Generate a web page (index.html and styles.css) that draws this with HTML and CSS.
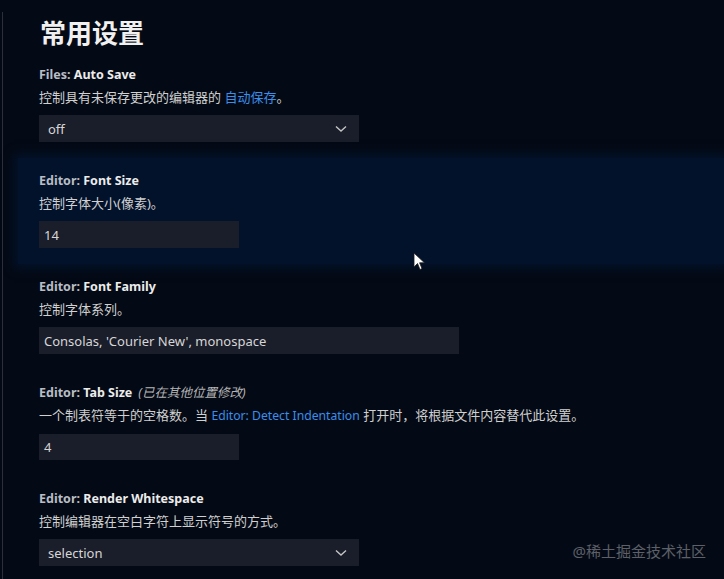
FILE: index.html
```html
<!DOCTYPE html>
<html lang="zh">
<head>
<meta charset="utf-8">
<link rel="stylesheet" href="styles.css">
</head>
<body>
<div class="page">
  <div class="content">
    <h1 class="title">常用设置</h1>

    <div class="setting">
      <div class="label"><span class="cat">Files: </span><span class="key">Auto Save</span></div>
      <div class="desc">控制具有未保存更改的编辑器的 <span class="link">自动保存</span>。</div>
      <div class="select w320"><span>off</span>
        <svg class="chev" width="12" height="8" viewBox="0 0 12 8"><path d="M1 1.5 L6 6 L11 1.5" fill="none" stroke="#c5c5c5" stroke-width="1.4"/></svg>
      </div>
    </div>

    <div class="setting hover">
      <div class="label"><span class="cat">Editor: </span><span class="key">Font Size</span></div>
      <div class="desc">控制字体大小(像素)。</div>
      <div class="input w200">14</div>
    </div>

    <div class="setting">
      <div class="label"><span class="cat">Editor: </span><span class="key">Font Family</span></div>
      <div class="desc">控制字体系列。</div>
      <div class="input w420">Consolas, 'Courier New', monospace</div>
    </div>

    <div class="setting">
      <div class="label"><span class="cat">Editor: </span><span class="key">Tab Size</span><span class="mod">(已在其他位置修改)</span></div>
      <div class="desc">一个制表符等于的空格数。当 <span class="link latin">Editor: Detect Indentation</span> 打开时，将根据文件内容替代此设置。</div>
      <div class="input w200">4</div>
    </div>

    <div class="setting">
      <div class="label"><span class="cat">Editor: </span><span class="key">Render Whitespace</span></div>
      <div class="desc">控制编辑器在空白字符上显示符号的方式。</div>
      <div class="select w320"><span>selection</span>
        <svg class="chev" width="12" height="8" viewBox="0 0 12 8"><path d="M1 1.5 L6 6 L11 1.5" fill="none" stroke="#c5c5c5" stroke-width="1.4"/></svg>
      </div>
    </div>
  </div>
  <div class="watermark">@稀土掘金技术社区</div>
  <svg class="cursor" width="14" height="20" viewBox="0 0 14 20"><path d="M1 1 L1 15 L4.5 11.5 L7 17.5 L9 16.6 L6.6 10.8 L11.5 10.8 Z" fill="#ffffff" stroke="#1a1a1a" stroke-width="0.8"/></svg>
</div>
</body>
</html>
```

FILE: styles.css
```css
html, body {
  margin: 0;
  padding: 0;
  background: #040a15;
  height: 100%;
  overflow: hidden;
}
.page {
  position: relative;
  width: 724px;
  height: 579px;
  background: #040a15;
  font-family: "Noto Sans", "Noto Sans CJK SC", sans-serif;
  color: #cccccc;
  overflow: hidden;
}
.page::before {
  content: "";
  position: absolute;
  left: 2px;
  top: 12px;
  bottom: 0;
  width: 1px;
  background: #2b2f3a;
}
.content {
  display: flex;
  flex-direction: column;
}
.title {
  margin: 0 0 2px 0;
  padding: 14px 0 0 40px;
  font-size: 26px;
  line-height: 36px;
  font-weight: 700;
  color: #f0f0f0;
  font-family: "Noto Sans CJK SC", sans-serif;
}
.setting {
  padding: 13px 0 16px 39px;
  height: 77px;
  display: flex;
  flex-direction: column;
  align-items: flex-start;
}
.setting.hover {
  background: #02122b;
  box-shadow: 0 0 10px 4px #02122b;
  margin-left: 18px;
  padding-left: 21px;
}
.label {
  font-size: 12.5px;
  line-height: 20px;
  margin-bottom: 2px;
  font-weight: 700;
  white-space: nowrap;
}
.cat { color: #b9bdc5; }
.key { color: #ececec; }
.mod {
  font-weight: 400;
  font-style: italic;
  color: #b5b5b5;
  margin-left: 6px;
}
.desc {
  font-size: 13px;
  line-height: 20px;
  margin-bottom: 8px;
  color: #d0d0d0;
  white-space: nowrap;
}
.link { color: #3b8eea; }
.link.latin { font-size: 12.2px; }
.select, .input {
  height: 27px;
  box-sizing: border-box;
  background: #1a1d2a;
  font-size: 13px;
  color: #d6d6d6;
  display: flex;
  align-items: center;
}
.select {
  padding: 0 12px 0 9px;
  justify-content: space-between;
}
.input { padding: 0 5px; }
.w320 { width: 320px; }
.w200 { width: 200px; }
.w420 { width: 420px; }
.chev { display: block; }
.watermark {
  position: absolute;
  right: 18px;
  top: 540px;
  font-size: 15px;
  line-height: 22px;
  color: #5d6068;
}
.cursor {
  position: absolute;
  left: 413px;
  top: 252px;
}
```
